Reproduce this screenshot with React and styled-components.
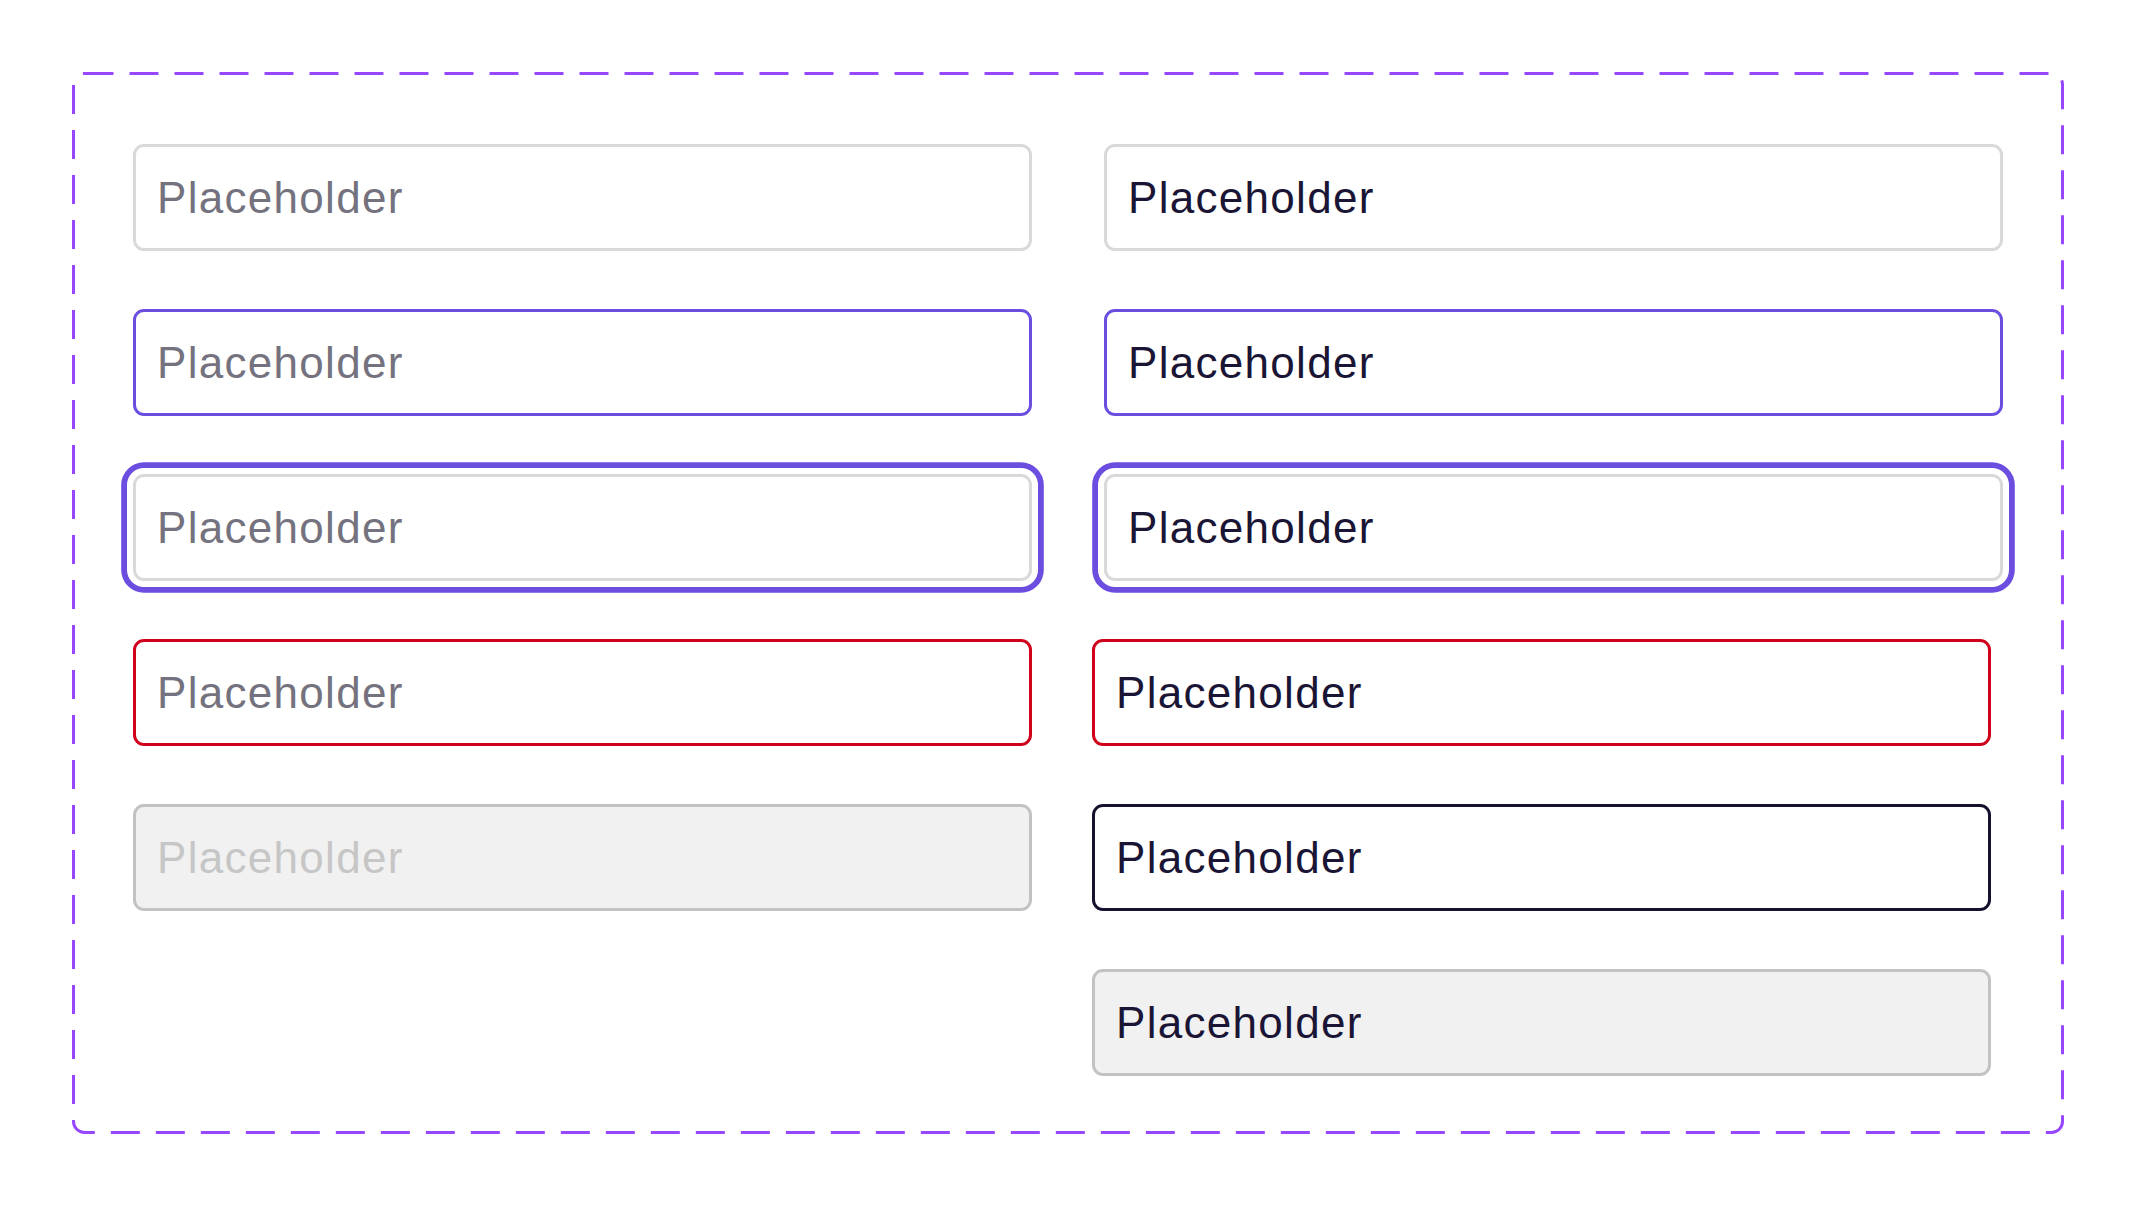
import React from 'react';
import styled, { createGlobalStyle, css } from 'styled-components';

const Global = createGlobalStyle`
  html, body { margin: 0; padding: 0; background: #ffffff; }
  body { font-family: "Liberation Sans", Arial, sans-serif; }
`;

const Frame = styled.section`
  position: relative;
  box-sizing: border-box;
  width: 1992px;
  height: 1062px;
  margin: 72px 0 0 72px;
  padding: 72px 0 0 61px;
  display: flex;
  align-items: flex-start;
  gap: 60px;
`;

const DashedOutline = styled.svg`
  position: absolute;
  inset: 0;
  width: 100%;
  height: 100%;
  pointer-events: none;
  overflow: visible;
`;

const Column = styled.div`
  display: flex;
  flex-direction: column;
  gap: 58px;
  width: ${(p) => p.$width}px;
`;

const variants = {
  default: css`
    border-color: #d9d9d9;
  `,
  hover: css`
    border-color: #6b4ee0;
  `,
  focus: css`
    border-color: #d9d9d9;
    box-shadow: 0 0 0 6px #ffffff, 0 0 0 11.8px #6b4ee0;
  `,
  error: css`
    border-color: #d0021b;
  `,
  active: css`
    border-color: #15112e;
  `,
  disabled: css`
    border-color: #c2c2c2;
    background: #f1f1f1;
  `,
};

const Field = styled.input`
  box-sizing: border-box;
  display: block;
  width: 899px;
  height: 107px;
  margin: 0 0 0 ${(p) => (p.$indent ? 12 : 0)}px;
  padding: 0 20px 0 21px;
  border: 3px solid #d9d9d9;
  border-radius: 11px;
  background: #ffffff;
  font-family: "Liberation Sans", Arial, sans-serif;
  font-size: 44px;
  letter-spacing: 1.3px;
  color: #1a1535;
  -webkit-text-fill-color: #1a1535;
  opacity: 1;
  outline: none;
  ${(p) => variants[p.$variant]}

  &::placeholder {
    color: #74727e;
    -webkit-text-fill-color: #74727e;
    opacity: 1;
  }
  &:disabled::placeholder {
    color: #c6c6c6;
    -webkit-text-fill-color: #c6c6c6;
  }
`;

const leftFields = ['default', 'hover', 'focus', 'error', 'disabled'];
const rightFields = [
  { variant: 'default', indent: true },
  { variant: 'hover', indent: true },
  { variant: 'focus', indent: true },
  { variant: 'error', indent: false },
  { variant: 'active', indent: false },
  { variant: 'disabled', indent: false },
];

export default function App() {
  return (
    <>
      <Global />
      <Frame>
        <DashedOutline viewBox="0 0 1992 1062" preserveAspectRatio="none">
          <rect
            x="1.5"
            y="1.5"
            width="1989"
            height="1059"
            rx="11"
            fill="none"
            stroke="#9747ff"
            strokeWidth="3"
            strokeDasharray="29 16"
          />
        </DashedOutline>
        <Column $width={899}>
          {leftFields.map((v) => (
            <Field
              key={v}
              $variant={v}
              placeholder="Placeholder"
              disabled={v === 'disabled'}
              readOnly
            />
          ))}
        </Column>
        <Column $width={911}>
          {rightFields.map((f) => (
            <Field
              key={f.variant}
              $variant={f.variant}
              $indent={f.indent}
              defaultValue="Placeholder"
              disabled={f.variant === 'disabled'}
              readOnly
            />
          ))}
        </Column>
      </Frame>
    </>
  );
}
